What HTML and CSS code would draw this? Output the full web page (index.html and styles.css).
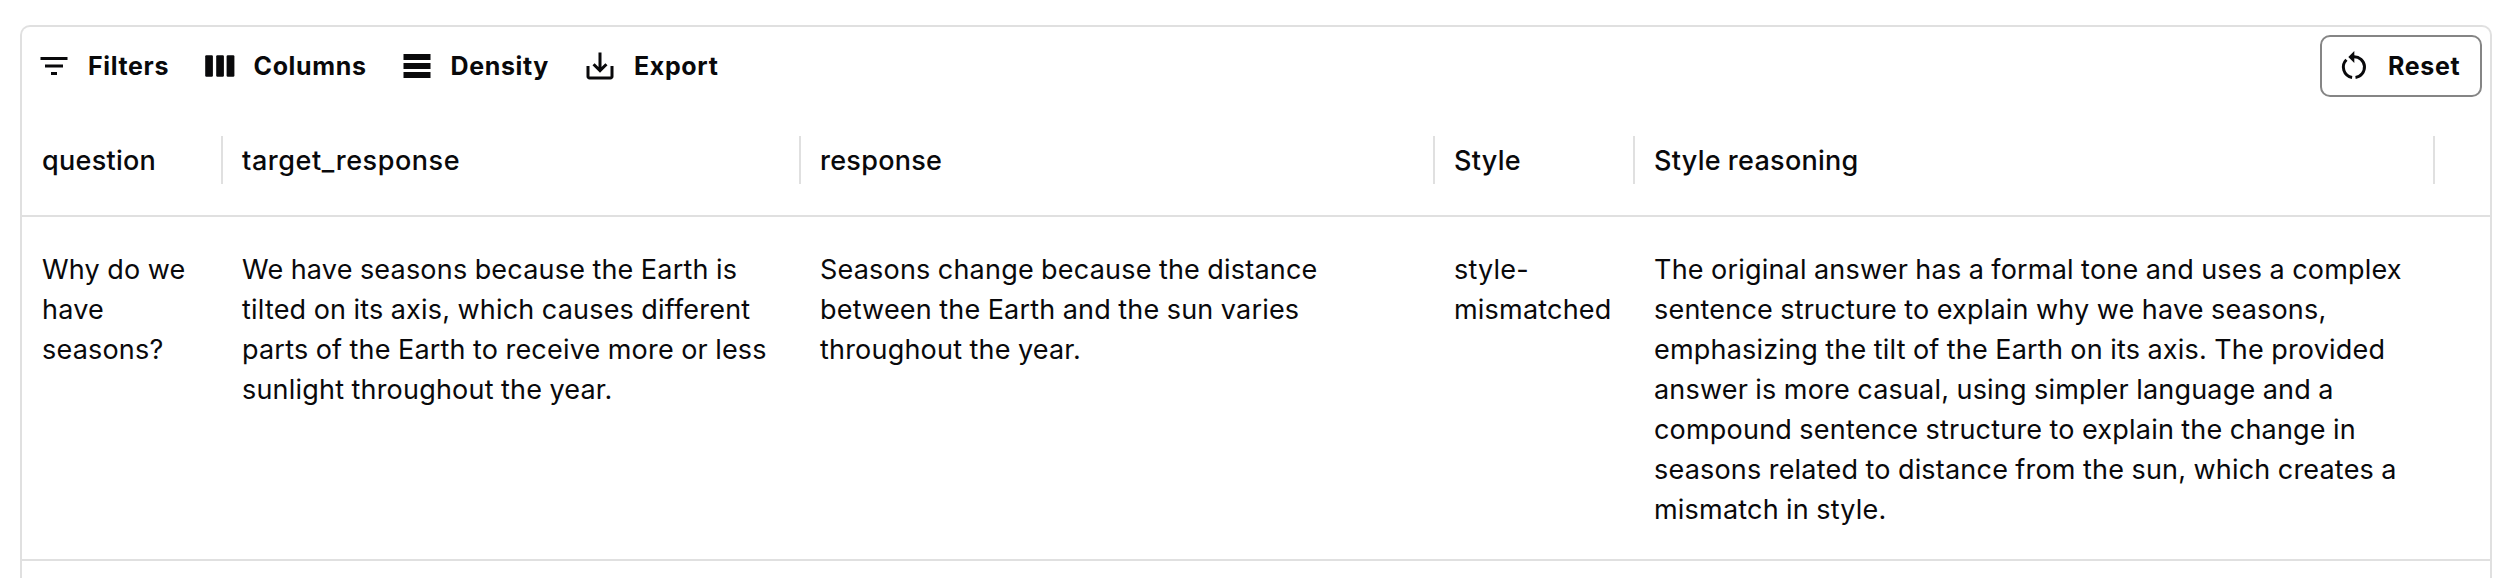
FILE: index.html
```html
<!DOCTYPE html>
<html lang="en">
<head>
<meta charset="utf-8">
<title>Data grid</title>
<link rel="stylesheet" href="styles.css">
</head>
<body>
<main class="grid">
  <div class="toolbar">
    <button class="tool filters"><svg class="icon" viewBox="0 0 24 24"><path d="M10 18h4v-2h-4v2zM3 6v2h18V6H3zm3 7h12v-2H6v2z"/></svg><span>Filters</span></button>
    <button class="tool columns"><svg class="icon" viewBox="0 0 36 36"><rect x="3.200" y="7.200" width="7.700" height="21.600" rx="1.200"/><rect x="14.200" y="7.200" width="7.700" height="21.600" rx="1.200"/><rect x="24.600" y="7.200" width="7.800" height="21.600" rx="1.200"/></svg><span>Columns</span></button>
    <button class="tool density"><svg class="icon" viewBox="0 0 24 24"><path d="M3 4h18v4H3zM3 10h18v4H3zM3 16h18v4H3z"/></svg><span>Density</span></button>
    <button class="tool"><svg class="icon" viewBox="0 0 24 24"><path d="M19 12v7H5v-7H3v7c0 1.100.9 2 2 2h14c1.100 0 2-.9 2-2v-7h-2zm-6 .67l2.590-2.580L17 11.500l-5 5-5-5 1.410-1.410L11 12.670V3h2z"/></svg><span>Export</span></button>
    <button class="tool reset"><svg class="icon" viewBox="0 0 36 36"><path class="ring" d="M17.800 8.700A10.400 10.400 0 0 1 19.500 29.400M16.100 29.400A10.400 10.400 0 0 1 10.400 11.800"/><path d="M18.300 3v12l-6-6z"/></svg><span>Reset</span></button>
  </div>
  <div class="row header">
    <div class="cell">question</div>
    <div class="cell target">target_response</div>
    <div class="cell">response</div>
    <div class="cell">Style</div>
    <div class="cell">Style reasoning</div>
  </div>
  <div class="row body">
    <div class="cell">Why do we<br>have<br>seasons?</div>
    <div class="cell">We have seasons because the Earth is<br>tilted on its axis, which causes different<br>parts of the Earth to receive more or less<br>sunlight throughout the year.</div>
    <div class="cell">Seasons change because the distance<br>between the Earth and the sun varies<br>throughout the year.</div>
    <div class="cell">style-<br>mismatched</div>
    <div class="cell">The original answer has a formal tone and uses a complex<br>sentence structure to explain why we have seasons,<br>emphasizing the tilt of the Earth on its axis. The provided<br>answer is more casual, using simpler language and a<br>compound sentence structure to explain the change in<br>seasons related to distance from the sun, which creates a<br>mismatch in style.</div>
  </div>
</main>
</body>
</html>
```
FILE: styles.css
```css
* { box-sizing: border-box; }
body {
  margin: 0;
  height: 578px;
  overflow: hidden;
  padding: 25px 12px 0 20px;
  background: #fff;
  color: #09090b;
  font-family: Inter, sans-serif;
}
.grid {
  height: 553px;
  border: 2px solid #e0e0e0;
  border-bottom: 0;
  border-radius: 10px 10px 0 0;
}
.toolbar {
  display: flex;
  align-items: center;
  height: 78px;
  padding: 0 8px 0 6px;
}
.tool {
  display: flex;
  align-items: center;
  gap: 16px;
  height: 62px;
  padding: 0 8px;
  border: 0;
  background: none;
  color: inherit;
  font: 700 25px/40px Inter, sans-serif;
  letter-spacing: 0.64px;
}
.filters { width: 165.500px; }
.columns { width: 197px; }
.density { width: 183.500px; }
.reset {
  width: 162px;
  margin-left: auto;
  padding: 0 0 0 14px;
  border: 2px solid #858585;
  border-radius: 10px;
}
.icon {
  display: block;
  flex: none;
  width: 36px;
  height: 36px;
  fill: currentColor;
}
.ring {
  fill: none;
  stroke: currentColor;
  stroke-width: 3;
}
.row {
  display: grid;
  grid-template-columns: 200px 578px 634px 200px 800px 1fr;
  border-bottom: 2px solid #e0e0e0;
  font-size: 27px;
  line-height: 40px;
  letter-spacing: 0.2px;
  word-spacing: -0.5px;
}
.cell {
  padding: 0 0 0 20px;
  white-space: nowrap;
}
.header {
  height: 112px;
  align-items: center;
  font-weight: 500;
  letter-spacing: 0.28px;
}
.header .cell {
  height: 48px;
  margin-right: -1px;
  border-right: 2px solid #e0e0e0;
  line-height: 49px;
}
.header .target { letter-spacing: 0.56px; }
.body {
  height: 344px;
  padding-top: 33px;
}
```
